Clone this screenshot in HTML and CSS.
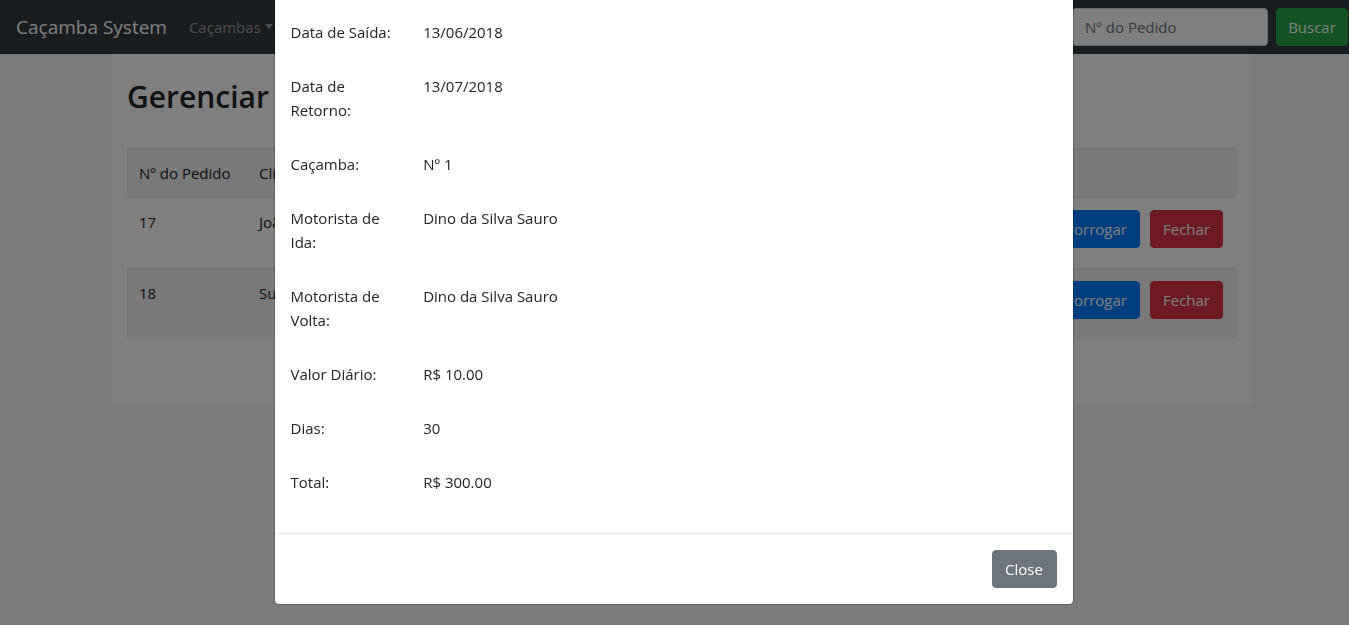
FILE: index.html
```html
<!DOCTYPE html>
<html lang="pt-BR">
<head>
<meta charset="utf-8">
<title>Caçamba System</title>
<link rel="stylesheet" href="styles.css">
</head>
<body>
<div class="page">
  <nav class="navbar">
    <a class="brand" href="#">Caçamba System</a>
    <ul class="nav">
      <li class="nav-item"><a class="nav-link" href="#">Caçambas<span class="caret"></span></a></li>
    </ul>
    <form class="search">
      <input class="search-input" type="text" placeholder="Nº do Pedido">
      <button class="btn btn-success btn-search" type="button">Buscar</button>
    </form>
  </nav>

  <main class="container">
    <h2 class="title">Gerenciar Pedidos</h2>
    <table class="table">
      <thead>
        <tr>
          <th class="c-num">Nº do Pedido</th>
          <th class="c-cli">Cliente</th>
          <th class="c-end">Endereço</th>
          <th class="c-date">Saída</th>
          <th class="c-date">Retorno</th>
          <th class="c-act"></th>
        </tr>
      </thead>
      <tbody>
        <tr>
          <td>17</td>
          <td>João da Silva</td>
          <td>Rua das Flores, 123</td>
          <td>13/06/2018</td>
          <td>13/07/2018</td>
          <td class="actions"><div class="btns"><button class="btn btn-info" type="button">Detalhes</button><button class="btn btn-primary" type="button">Prorrogar</button><button class="btn btn-danger" type="button">Fechar</button></div></td>
        </tr>
        <tr class="striped">
          <td>18</td>
          <td>Sueli Souza</td>
          <td>Av. Brasil, 450</td>
          <td>14/06/2018</td>
          <td>14/07/2018</td>
          <td class="actions"><div class="btns"><button class="btn btn-info" type="button">Detalhes</button><button class="btn btn-primary" type="button">Prorrogar</button><button class="btn btn-danger" type="button">Fechar</button></div></td>
        </tr>
      </tbody>
    </table>
  </main>
</div>

<div class="backdrop"></div>

<div class="modal">
  <div class="modal-dialog">
    <div class="modal-body">
      <div class="row"><div class="label">Data de Saída:</div><div class="value">13/06/2018</div></div>
      <div class="row"><div class="label">Data de Retorno:</div><div class="value">13/07/2018</div></div>
      <div class="row"><div class="label">Caçamba:</div><div class="value">Nº 1</div></div>
      <div class="row"><div class="label">Motorista de Ida:</div><div class="value">Dino da Silva Sauro</div></div>
      <div class="row"><div class="label">Motorista de Volta:</div><div class="value">Dino da Silva Sauro</div></div>
      <div class="row"><div class="label">Valor Diário:</div><div class="value">R$ 10.00</div></div>
      <div class="row"><div class="label">Dias:</div><div class="value">30</div></div>
      <div class="row"><div class="label">Total:</div><div class="value">R$ 300.00</div></div>
    </div>
    <div class="modal-footer">
      <button class="btn btn-secondary btn-close" type="button">Close</button>
    </div>
  </div>
</div>
</body>
</html>
```

FILE: styles.css
```css
* { box-sizing: border-box; }

html, body {
  margin: 0;
  padding: 0;
  overflow: hidden;
  height: 100%;
}

body {
  font-family: "Open Sans", "Noto Sans", sans-serif;
  font-size: 15px;
  line-height: 24px;
  color: #212529;
  background: #f5f5f5;
}

.page {
  width: 1364px;
}

/* navbar */
.navbar {
  display: flex;
  align-items: center;
  height: 54px;
  padding: 8px 16px;
  background: #343a40;
}

.brand {
  font-size: 19px;
  line-height: 30px;
  color: #fff;
  text-decoration: none;
  margin-right: 14px;
  white-space: nowrap;
}

.nav {
  list-style: none;
  margin: 0;
  padding: 0;
  display: flex;
  flex: 1;
}

.nav-link {
  display: block;
  padding: 8px;
  color: rgba(255, 255, 255, 0.5);
  text-decoration: none;
}

.caret {
  display: inline-block;
  margin-left: 4px;
  vertical-align: 4px;
  border-top: 5px solid;
  border-left: 4.5px solid transparent;
  border-right: 4.5px solid transparent;
}

.search {
  display: flex;
  align-items: center;
  margin: 0;
}

.search-input {
  width: 196px;
  height: 38px;
  margin-right: 8px;
  padding: 6px 12px;
  font: inherit;
  color: #495057;
  background: #fff;
  border: 1px solid #ced4da;
  border-radius: 4px;
}

.search-input::placeholder { color: #6c757d; }

/* buttons */
.btn {
  display: inline-block;
  height: 38px;
  padding: 6px 12px;
  font: inherit;
  line-height: 24px;
  color: #fff;
  border: 1px solid transparent;
  border-radius: 4px;
  cursor: pointer;
  white-space: nowrap;
}

.btn-search {
  width: 72px;
  padding: 6px 0;
  text-align: center;
}

.btn-close {
  width: 65px;
  padding: 6px 0;
  text-align: center;
}

.btn-success { background: #28a745; border-color: #28a745; }
.btn-primary { background: #007bff; border-color: #007bff; }
.btn-danger { background: #dc3545; border-color: #dc3545; }
.btn-info { background: #17a2b8; border-color: #17a2b8; }
.btn-secondary { background: #6c757d; border-color: #6c757d; }

/* content */
.container {
  width: 1140px;
  margin: 0 auto;
  padding: 24px 15px 49px;
  background: #fff;
}

.title {
  margin: 0 0 32px;
  font-size: 30px;
  line-height: 38px;
  font-weight: 600;
}

.table {
  width: 100%;
  border-collapse: collapse;
  table-layout: fixed;
  margin-bottom: 16px;
}

.table th,
.table td {
  padding: 12px;
  text-align: left;
  vertical-align: top;
  border-top: 1px solid #dee2e6;
  font-weight: 400;
  white-space: nowrap;
  overflow: hidden;
}

.table thead th {
  background: #f2f2f2;
  border-bottom: 1px solid #dee2e6;
}

.c-num { width: 120px; }
.c-cli { width: 190px; }
.c-end { width: 220px; }
.c-date { width: 120px; }

.table tr.striped td { background: #f2f2f2; }

.table td.actions {
  padding-right: 14px;
  padding-bottom: 12px;
}

.btns {
  display: flex;
  justify-content: flex-end;
  gap: 10px;
  height: 46px;
}

/* modal */
.backdrop {
  position: fixed;
  inset: 0;
  background: rgba(0, 0, 0, 0.5);
}

.modal {
  position: fixed;
  inset: 0;
  display: flex;
  justify-content: center;
  align-items: flex-end;
  padding: 0 2px 20px 0;
}

.modal-dialog {
  width: 800px;
  flex-shrink: 0;
  background: #fff;
  border: 1px solid rgba(0, 0, 0, 0.2);
  border-radius: 5px;
  background-clip: padding-box;
}

.modal-body {
  padding: 36px 16px 39px;
}

.row {
  display: flex;
  margin: 0 -15px 30px;
}

.row:last-child { margin-bottom: 0; }

.label {
  flex: 0 0 16.6667%;
  max-width: 16.6667%;
  padding: 0 15px;
}

.value {
  flex: 1;
  padding: 0 15px;
}

.modal-footer {
  display: flex;
  justify-content: flex-end;
  padding: 16px;
  border-top: 1px solid #e9ecef;
}
```
